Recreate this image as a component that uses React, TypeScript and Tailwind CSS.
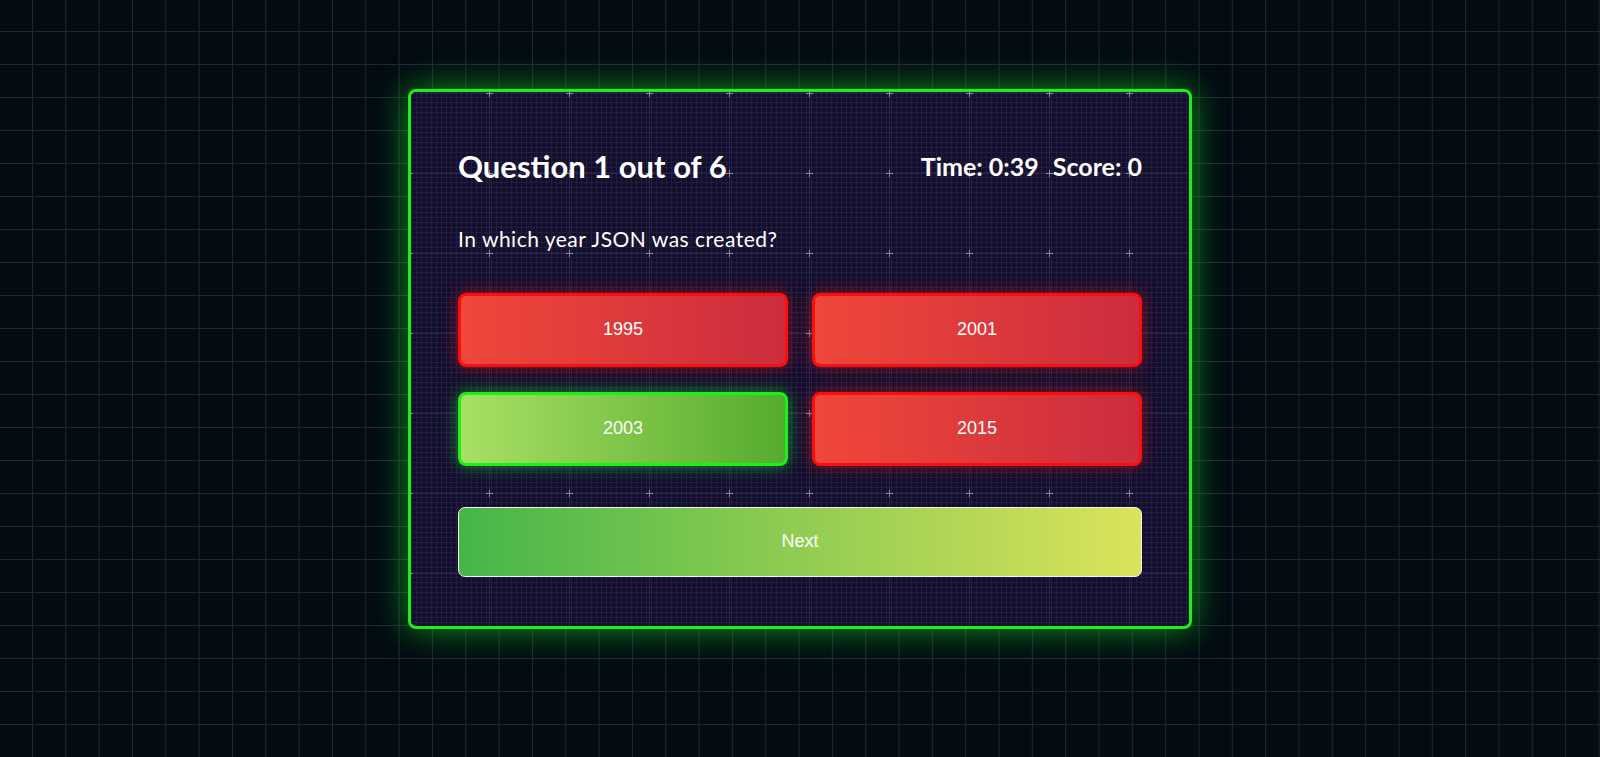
import React from "react";

const answers = [
  { label: "1995", correct: false },
  { label: "2001", correct: false },
  { label: "2003", correct: true },
  { label: "2015", correct: false },
];

function CardPattern() {
  return (
    <svg className="pointer-events-none absolute inset-0 h-full w-full" aria-hidden="true">
      <defs>
        <pattern id="smallGrid" x="0" y="0" width="5" height="5" patternUnits="userSpaceOnUse">
          <path d="M0.5 0V5M0 0.5H5" fill="none" stroke="#211c42" strokeWidth="1" />
        </pattern>
        <pattern id="bigGrid" x="38" y="-39" width="80" height="80" patternUnits="userSpaceOnUse">
          <path d="M40.5 0V80M0 40.5H80" fill="none" stroke="#29254d" strokeWidth="1" />
          <path d="M40.5 37V44M37 40.5H44" fill="none" stroke="#8c89a3" strokeWidth="1" />
        </pattern>
      </defs>
      <rect width="100%" height="100%" fill="url(#smallGrid)" />
      <rect width="100%" height="100%" fill="url(#bigGrid)" />
    </svg>
  );
}

export default function App() {
  return (
    <div className="min-h-screen w-full bg-[#030b13] bg-[image:linear-gradient(to_right,#1e2932_1px,transparent_1px),linear-gradient(to_bottom,#1e2932_1px,transparent_1px)] bg-size-[33.333px_33px] bg-position-[32px_31px] pt-[89px]">
      <div className="relative mx-auto w-[784px] overflow-hidden rounded-[8px] border-[3px] border-[#1cf01c] bg-[#130e2a] shadow-[0_0_34px_rgba(20,240,20,0.6)]">
        <CardPattern />
        <div className="relative px-[47px] pt-[55px] pb-[49px]">
          <div className="flex items-center justify-between font-['Lato',sans-serif] font-bold text-white">
            <h1 className="text-[31px] leading-[1.24]">Question 1 out of 6</h1>
            <div className="flex gap-[14px] text-[25px] leading-[1.2]">
              <span>Time: 0:39</span>
              <span>Score: 0</span>
            </div>
          </div>
          <p className="mt-[41px] font-['Lato',sans-serif] text-[21px] leading-[1.2] tracking-[0.5px] text-white">
            In which year JSON was created?
          </p>
          <div className="mt-[41px] grid grid-cols-2 gap-x-[24px] gap-y-[25px]">
            {answers.map((a) =>
              a.correct ? (
                <button
                  key={a.label}
                  className="flex h-[74px] items-center justify-center rounded-[8px] border-[3px] border-[#1cf01c] bg-[linear-gradient(to_right,#a8e063,#56ab2f)] font-['Liberation_Sans',Arial,sans-serif] text-[18px] text-white shadow-[0_0_16px_rgba(30,255,30,0.5)]"
                >
                  {a.label}
                </button>
              ) : (
                <button
                  key={a.label}
                  className="flex h-[74px] items-center justify-center rounded-[8px] border-[3px] border-[#ff0d0d] bg-[linear-gradient(to_right,#ef473a,#cb2d3e)] font-['Liberation_Sans',Arial,sans-serif] text-[18px] text-white shadow-[0_0_16px_rgba(255,20,20,0.5)]"
                >
                  {a.label}
                </button>
              )
            )}
          </div>
          <button className="mt-[41px] flex h-[70px] w-full items-center justify-center rounded-[7px] border border-[#f2f2f2] bg-[linear-gradient(to_right,#45b649,#dce35b)] font-['Liberation_Sans',Arial,sans-serif] text-[18px] text-white">
            Next
          </button>
        </div>
      </div>
    </div>
  );
}
